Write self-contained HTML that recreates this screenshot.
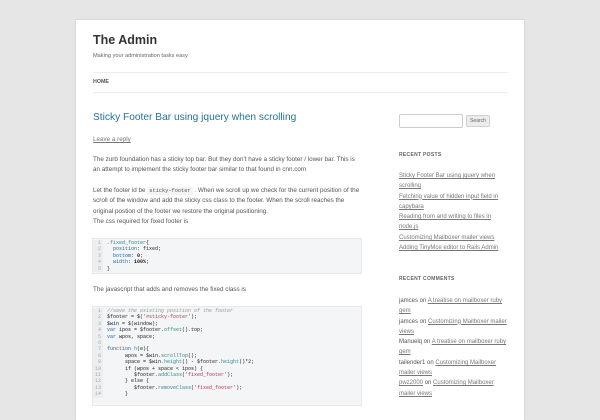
<!DOCTYPE html>
<html><head><style>
*{margin:0;padding:0;box-sizing:border-box}
body{width:600px;height:400px;overflow:hidden;background:#e6e6e6;font-family:"Liberation Sans",sans-serif;color:#444;position:relative}
#c{position:absolute;left:76px;top:20px;width:448px;height:400px;background:#fff;box-shadow:0 0 2px rgba(0,0,0,.15)}
.a{position:absolute;white-space:nowrap}
.t{font-size:6.3px;line-height:10.3px;color:#555}
.l{color:#777;text-decoration:underline}
pre{position:absolute;left:92px;width:270px;background:#f4f5f7;border:1px solid #e8e8ec;font-family:"Liberation Mono",monospace;font-size:5px;line-height:6.4px;color:#222;padding:1px 0;overflow:hidden}
pre .n{display:inline-block;width:10px;text-align:right;color:#aaa;margin-right:4px;padding-right:2px;background:#eceef0}
.k{color:#26a}.s{color:#b35}.c{color:#999;font-style:italic}.f{color:#388}
h4{font-size:5px;letter-spacing:.3px;color:#636363;font-weight:bold}
</style></head><body>
<div id="c"></div>
<div class="a" style="left:93px;top:33px;font-size:12.5px;font-weight:bold;color:#333">The Admin</div>
<div class="a" style="left:93px;top:53px;font-size:5.6px;color:#666">Making your administration tasks easy</div>
<div class="a" style="left:93px;top:72px;width:415px;border-top:1px solid #ededed"></div>
<div class="a" style="left:93px;top:79px;font-size:5.3px;font-weight:bold;color:#555">HOME</div>
<div class="a" style="left:93px;top:92px;width:415px;border-top:1px solid #ededed"></div>
<div class="a" style="left:93px;top:112px;font-size:10.2px;color:#21759b">Sticky Footer Bar using jquery when scrolling</div>
<div class="a t l" style="left:93px;top:135px">Leave a reply</div>
<div class="a t" style="left:93px;top:155px">The zurb foundation has a sticky top bar. But they don't have a sticky footer / lower bar. This is<br>an attempt to implement the sticky footer bar similar to that found in cnn.com</div>
<div class="a t" style="left:93px;top:186px">Let the footer id be <span style="font-family:'Liberation Mono',monospace;font-size:5.3px;background:#f2f3f5;padding:1px 2px;color:#555">sticky-footer</span> . When we scroll up we check for the current position of the<br>scroll of the window and add the sticky css class to the footer. When the scroll reaches the<br>original postion of the footer we restore the original positioning.<br>The css required for fixed footer is</div>
<pre style="top:238px;height:36px"><span class="n">1</span><span class="f">.fixed_footer</span>{
<span class="n">2</span>  <span class="k">position</span>: fixed;
<span class="n">3</span>  <span class="k">bottom</span>: <b>0</b>;
<span class="n">4</span>  <span class="k">width</span>: <b>100%</b>;
<span class="n">5</span>}</pre>
<div class="a t" style="left:93px;top:285px">The javascript that adds and removes the fixed class is</div>
<pre style="top:306px;height:100px"><span class="n">1</span><span class="c">//save the existing position of the footer</span>
<span class="n">2</span>$footer = $(<span class="s">'#sticky-footer'</span>);
<span class="n">3</span>$win = $(window);
<span class="n">4</span><span class="k">var</span> ipos = $footer.<span class="f">offset</span>().top;
<span class="n">5</span><span class="k">var</span> wpos, space;
<span class="n">6</span>
<span class="n">7</span><span class="k">function</span> <span class="f">h</span>(e){
<span class="n">8</span>      wpos = $win.<span class="f">scrollTop</span>();
<span class="n">9</span>      space = $win.<span class="f">height</span>() - $footer.<span class="f">height</span>()*2;
<span class="n">10</span>      if (wpos + space &lt; ipos) {
<span class="n">11</span>         $footer.<span class="f">addClass</span>(<span class="s">'fixed_footer'</span>);
<span class="n">12</span>      } else {
<span class="n">13</span>         $footer.<span class="f">removeClass</span>(<span class="s">'fixed_footer'</span>);
<span class="n">14</span>      }</pre>
<div class="a" style="left:399px;top:114px;width:64px;height:14px;border:1px solid #ccc;border-radius:2px"></div>
<div class="a" style="left:466px;top:115px;width:24px;height:12px;border:1px solid #d2d2d2;background:#ececec;border-radius:2px;font-size:5px;color:#666;text-align:center;line-height:10px">Search</div>
<h4 class="a" style="left:399px;top:152px">RECENT POSTS</h4>
<div class="a t l" style="left:399px;top:171px;font-size:6px">Sticky Footer Bar using jquery when<br>scrolling<br>Fetching value of hidden input field in<br>capybara<br>Reading from and writing to files in<br>node.js<br>Customizing Mailboxer mailer views<br>Adding TinyMce editor to Rails Admin</div>
<h4 class="a" style="left:399px;top:276px">RECENT COMMENTS</h4>
<div class="a t" style="left:399px;top:296px;font-size:6px">jamces on <span class="l">A treatise on mailboxer ruby</span><br><span class="l">gem</span><br>jamces on <span class="l">Customizing Mailboxer mailer</span><br><span class="l">views</span><br>Manuelq on <span class="l">A treatise on mailboxer ruby</span><br><span class="l">gem</span><br>tailender1 on <span class="l">Customizing Mailboxer</span><br><span class="l">mailer views</span><br><span class="l">pwz2000</span> on <span class="l">Customizing Mailboxer</span><br><span class="l">mailer views</span></div>
</body></html>
